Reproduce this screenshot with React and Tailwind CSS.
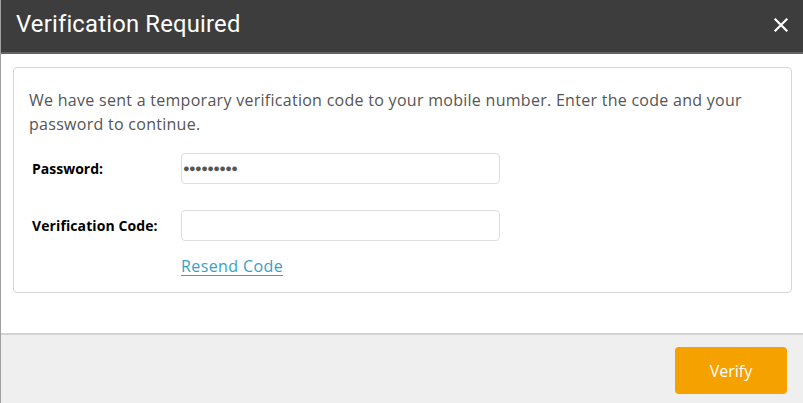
import React from "react";

export default function App() {
  return (
    <div className="w-[803px] h-[403px] flex flex-col bg-white border-l border-[#a0a0a0] overflow-hidden" style={{ fontFamily: '"Open Sans", "Noto Sans", sans-serif' }}>
      <div className="h-[54px] shrink-0 bg-[#3d3d3e] border-b-2 border-[#646464] flex items-center justify-between pl-[15px] pr-[14px]">
        <h1 className="text-white text-[23.8px] tracking-[0.2px] pb-[3px]" style={{ fontFamily: 'Roboto, "Liberation Sans", sans-serif' }}>Verification Required</h1>
        <svg width="16" height="16" viewBox="0 0 16 16" className="mb-[3px]">
          <path d="M2.5 2.5 L13.5 13.5 M13.5 2.5 L2.5 13.5" stroke="white" strokeWidth="2.2" strokeLinecap="square" />
        </svg>
      </div>
      <div className="flex-1 pt-[13px] pl-[12px] pr-[11px]">
        <div className="h-[226px] border border-[#d6d6d6] rounded-[4px] pt-[20px] pl-[18px] pr-[16px]">
          <p className="-ml-[3px] text-[16px] tracking-[0.28px] leading-[24px] text-[#555555]">We have sent a temporary verification code to your mobile number. Enter the code and your password to continue.</p>
          <div className="mt-[17px] flex items-center">
            <label className="w-[149px] text-[14px] font-bold text-black">Password:</label>
            <div className="w-[319px] h-[31px] border border-[#dedede] rounded-[4px] flex items-center pl-[1px]">
              <span className="text-[#555555] text-[11px] tracking-[-0.6px]">●●●●●●●●●</span>
            </div>
          </div>
          <div className="mt-[26px] flex items-center">
            <label className="w-[149px] text-[14px] font-bold text-black tracking-[0.1px]">Verification Code:</label>
            <div className="w-[319px] h-[31px] border border-[#dedede] rounded-[4px]"></div>
          </div>
          <div className="pl-[149px] mt-[13px]">
            <a href="#" className="text-[16px] tracking-[0.4px] text-[#3a9fc5] underline underline-offset-[3px]">Resend Code</a>
          </div>
        </div>
      </div>
      <div className="h-[70px] shrink-0 bg-[#efefef] border-t-2 border-[#d3d3d3] flex items-start justify-end pr-[16px] pt-[12px]">
        <button className="w-[112px] h-[47px] bg-[#f5a100] rounded-[4px] text-white text-[16px]">Verify</button>
      </div>
    </div>
  );
}
